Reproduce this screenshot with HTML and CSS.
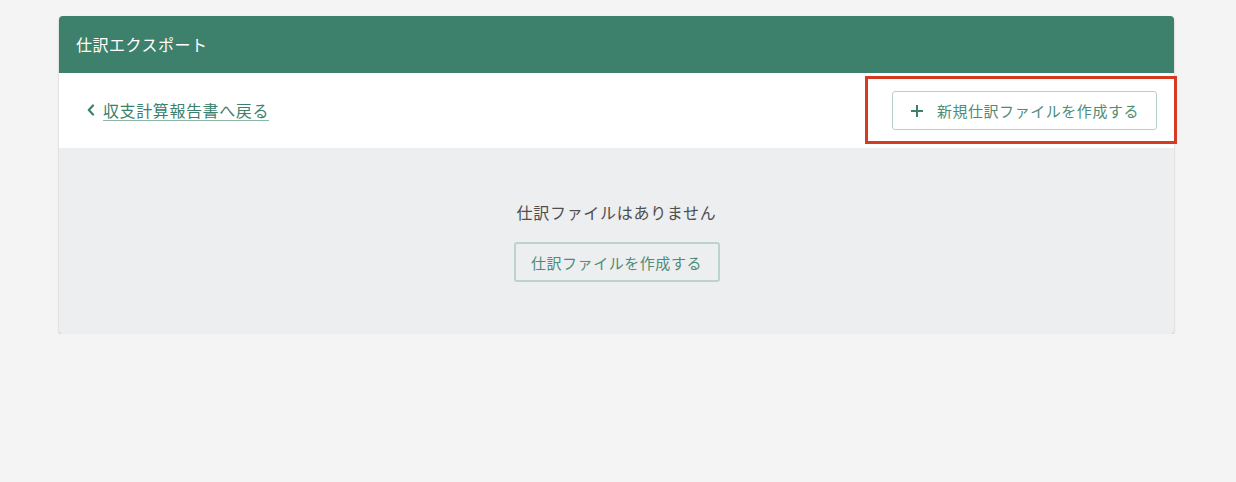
FILE: index.html
```html
<!DOCTYPE html>
<html lang="ja">
<head>
<meta charset="utf-8">
<title>仕訳エクスポート</title>
<link rel="stylesheet" href="styles.css">
</head>
<body>
<div class="card">
  <div class="card-header">仕訳エクスポート</div>
  <div class="toolbar">
    <a class="back-link" href="#">
      <svg class="chevron" width="10" height="12" viewBox="0 0 10 12"><path d="M7 1.5 L2.8 6 L7 10.5" fill="none" stroke="currentColor" stroke-width="2.2" stroke-linecap="round" stroke-linejoin="round"/></svg>
      <span class="back-text">収支計算報告書へ戻る</span>
    </a>
    <div class="new-wrap">
      <button class="btn btn-new">
        <svg class="plus" width="14" height="14" viewBox="0 0 14 14"><path d="M7 1 V13 M1 7 H13" stroke="currentColor" stroke-width="2" fill="none"/></svg>
        <span>新規仕訳ファイルを作成する</span>
      </button>
      <div class="highlight"></div>
    </div>
  </div>
  <div class="empty">
    <p class="empty-text">仕訳ファイルはありません</p>
    <button class="btn btn-create">仕訳ファイルを作成する</button>
  </div>
</div>
</body>
</html>
```
FILE: styles.css
```css
* { box-sizing: border-box; }
html, body { margin: 0; padding: 0; }
body {
  background: #f4f4f4;
  font-family: "Noto Sans CJK JP", "Noto Sans", sans-serif;
  color: #4a4a4a;
  padding: 16px 62px 0 59px;
}
.card {
  width: 1115px;
  border-radius: 4px;
  background: #edeef0;
  box-shadow: 0 1px 2px rgba(0,0,0,0.25);
}
.card-header {
  height: 57px;
  background: #3d816c;
  color: #ffffff;
  font-size: 16px;
  letter-spacing: 0.5px;
  line-height: 56px;
  padding-left: 17px;
  border-radius: 4px 4px 0 0;
}
.toolbar {
  height: 75px;
  background: #ffffff;
  display: flex;
  align-items: center;
  justify-content: space-between;
  padding: 0 17px 0 27px;
}
.back-link {
  display: flex;
  align-items: center;
  gap: 7px;
  color: #3d816c;
  text-decoration: none;
  font-size: 16px;
  letter-spacing: 0.6px;
  margin-top: -2px;
}
.back-text {
  text-decoration: underline;
  text-decoration-color: #8fb8ab;
  text-underline-offset: 3px;
}
.chevron { color: #3d816c; }
.new-wrap { position: relative; }
.btn {
  font-family: inherit;
  background: transparent;
  border: 1px solid #b9d0c8;
  border-radius: 3px;
  color: #4d8d78;
  font-size: 15px;
  letter-spacing: 0.55px;
  cursor: pointer;
}
.btn-new {
  width: 265px;
  height: 39px;
  display: flex;
  align-items: center;
  justify-content: center;
  gap: 13px;
  background: #ffffff;
  padding: 0;
}
.plus { color: #3d816c; }
.highlight {
  position: absolute;
  left: -27px;
  top: -15px;
  width: 312px;
  height: 68px;
  border: 3px solid #d63a22;
  pointer-events: none;
}
.empty {
  display: flex;
  flex-direction: column;
  align-items: center;
  padding: 53px 0 52px;
  border-radius: 0 0 4px 4px;
}
.empty-text {
  margin: 0 0 19px;
  font-size: 16px;
  letter-spacing: 0.7px;
  line-height: 22px;
  color: #4f4f4f;
}
.btn-create {
  width: 206px;
  height: 40px;
  background: transparent;
  border-width: 2px;
  border-color: #bcd3cb;
  padding: 0;
}
```
